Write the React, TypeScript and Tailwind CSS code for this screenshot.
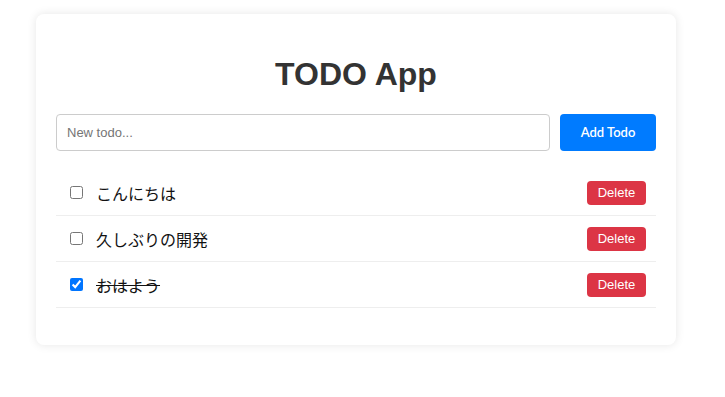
import React, { useState } from 'react';

type Todo = { id: number; text: string; done: boolean };

export default function App() {
    const [todos, setTodos] = useState<Todo[]>([
        { id: 1, text: 'こんにちは', done: false },
        { id: 2, text: '久しぶりの開発', done: false },
        { id: 3, text: 'おはよう', done: true },
    ]);
    const [text, setText] = useState('');

    const add = () => {
        if (!text.trim()) return;
        setTodos([...todos, { id: Date.now(), text, done: false }]);
        setText('');
    };

    return (
        <div className="min-h-[397px] bg-white pt-[14px] font-['Liberation_Sans','Noto_Sans_CJK_JP',sans-serif]">
            <div className="mx-[36px] w-[640px] rounded-lg bg-white p-5 shadow-[0_0_10px_rgba(0,0,0,0.1)]">
                <h1 className="mt-[22px] mb-[21px] text-center text-[32px] leading-[37px] font-bold text-[#333]">
                    TODO App
                </h1>

                <div className="flex gap-[10px]">
                    <input
                        value={text}
                        onChange={(e) => setText(e.target.value)}
                        placeholder="New todo..."
                        className="h-[37px] flex-1 rounded border border-[#ccc] px-[10px] text-[13px] text-[#333] placeholder:text-[#757575] outline-none"
                    />
                    <button
                        onClick={add}
                        className="h-[37px] w-[96px] rounded bg-[#007bff] text-[13px] font-semibold text-white font-['Lato','Liberation_Sans',sans-serif]"
                    >
                        Add Todo
                    </button>
                </div>

                <ul className="mt-[19px] mb-[17px]">
                    {todos.map((t) => (
                        <li
                            key={t.id}
                            className="flex h-[46px] items-center border-b border-[#eee] px-[10px]"
                        >
                            <input
                                type="checkbox"
                                checked={t.done}
                                onChange={() =>
                                    setTodos(todos.map((x) => (x.id === t.id ? { ...x, done: !x.done } : x)))
                                }
                                className="ml-[4px] mr-[3px] h-[13px] w-[13px] accent-[#0075ff]"
                            />
                            <span
                                className={`ml-[10px] flex-1 text-[16px] text-[#111] font-['Noto_Sans_CJK_JP',sans-serif] ${t.done ? 'line-through' : ''}`}
                            >
                                {t.text}
                            </span>
                            <button
                                onClick={() => setTodos(todos.filter((x) => x.id !== t.id))}
                                className="h-[24px] w-[59px] rounded bg-[#dc3545] text-[13px] text-white"
                            >
                                Delete
                            </button>
                        </li>
                    ))}
                </ul>
            </div>
        </div>
    );
}
